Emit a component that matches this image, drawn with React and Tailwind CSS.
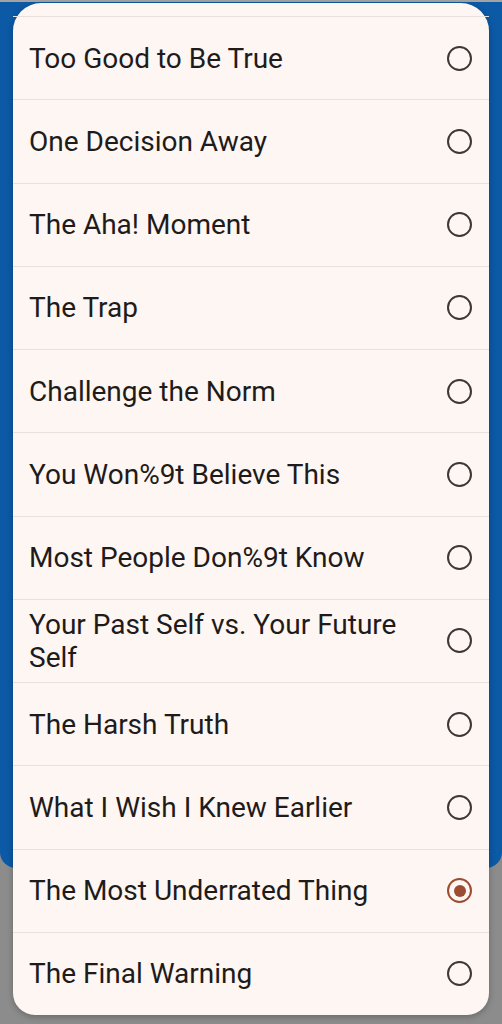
import React from "react";

const items = [
  "Too Good to Be True",
  "One Decision Away",
  "The Aha! Moment",
  "The Trap",
  "Challenge the Norm",
  "You Won%9t Believe This",
  "Most People Don%9t Know",
  "Your Past Self vs. Your Future Self",
  "The Harsh Truth",
  "What I Wish I Knew Earlier",
  "The Most Underrated Thing",
  "The Final Warning",
];

function Radio({ checked }) {
  return checked ? (
    <span className="flex h-[25px] w-[25px] shrink-0 items-center justify-center rounded-full border-[2.5px] border-[#9b4c33]">
      <span className="h-[12px] w-[12px] rounded-full bg-[#9b4c33]" />
    </span>
  ) : (
    <span className="h-[25px] w-[25px] shrink-0 rounded-full border-[2.5px] border-[#3d3836]" />
  );
}

export default function App() {
  return (
    <div className="relative h-[1024px] w-[502px] overflow-hidden bg-[#8c8c8c]" style={{ fontFamily: "Roboto, 'Noto Sans', sans-serif" }}>
      <div className="h-[2px] bg-[#a3a3a3]" />
      <div className="h-[866px] rounded-b-[16px] bg-[#0c59a6]" />
      <div className="absolute left-[13px] top-[3px] w-[476px] rounded-t-[28px] rounded-b-[22px] bg-[#fdf6f3] pt-[13px] shadow-[0_2px_6px_rgba(0,0,0,0.25)]">
        {items.map((t, i) => (
          <div
            key={i}
            className="flex h-[83.25px] items-center justify-between border-t border-[#e7e1de] pl-[16px] pr-[17px]"
          >
            <span className="max-w-[395px] text-[28px] leading-[33px] text-[#1e1b1a]">{t}</span>
            <Radio checked={i === 10} />
          </div>
        ))}
      </div>
    </div>
  );
}
